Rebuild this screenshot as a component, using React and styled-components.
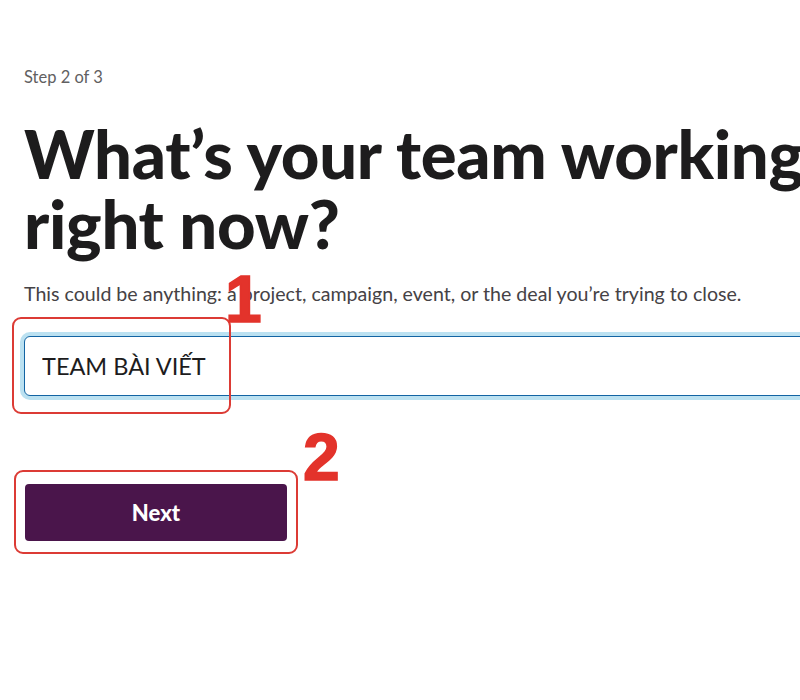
import styled, { createGlobalStyle } from 'styled-components';

const GlobalStyle = createGlobalStyle`
    html, body {
        margin: 0;
        padding: 0;
        background: #ffffff;
        overflow: hidden;
    }
    body {
        font-family: Lato, "Noto Sans", sans-serif;
        color: #1d1c1d;
    }
`;

const Page = styled.div`
    width: 800px;
    height: 700px;
    overflow: hidden;
    position: relative;
`;

const Content = styled.div`
    width: 960px;
    padding: 66px 0 0 24px;
    display: flex;
    flex-direction: column;
    align-items: flex-start;
`;

const StepLabel = styled.div`
    font-size: 16.5px;
    line-height: 22px;
    color: #616061;
`;

const Heading = styled.h1`
    margin: 30px 0 0 0;
    font-size: 67px;
    line-height: 70px;
    font-weight: 900;
    letter-spacing: -0.3px;
    white-space: nowrap;
    color: #1d1c1d;
`;

const Subtitle = styled.p`
    margin: 24px 0 0 0;
    font-size: 19.6px;
    line-height: 24px;
    color: #454245;
    white-space: nowrap;
`;

const Field = styled.input`
    box-sizing: border-box;
    margin-top: 30px;
    width: 900px;
    height: 60px;
    padding: 0 17px;
    font-family: inherit;
    font-size: 23.5px;
    color: #1d1c1d;
    border: 1px solid #1264a3;
    border-radius: 6px;
    box-shadow: 0 0 0 4px rgba(29, 155, 209, 0.3);
    outline: none;
    background: #fff;
`;

const NextButton = styled.button`
    margin-top: 88px;
    margin-left: 1px;
    width: 262px;
    height: 57px;
    border: none;
    border-radius: 4px;
    background: #4a154b;
    color: #fff;
    font-family: inherit;
    font-size: 22px;
    font-weight: 900;
    cursor: pointer;
`;

const Highlight = styled.div`
    position: absolute;
    left: ${p => p.$x}px;
    top: ${p => p.$y}px;
    width: ${p => p.$w}px;
    height: ${p => p.$h}px;
    box-sizing: border-box;
    border: 2px solid #dc3b35;
    border-radius: 9px;
`;

const Marker = styled.div`
    position: absolute;
    left: ${p => p.$x}px;
    top: ${p => p.$y}px;
    font-family: "Liberation Sans", Arial, sans-serif;
    font-weight: 700;
    font-size: 66px;
    line-height: 1;
    color: #e3332b;
    -webkit-text-stroke: 1.5px #e3332b;
`;

export default function App() {
    return (
        <Page>
            <GlobalStyle />
            <Content>
                <StepLabel>Step 2 of 3</StepLabel>
                <Heading>
                    What’s your team working on
                    <br />
                    right now?
                </Heading>
                <Subtitle>
                    This could be anything: a project, campaign, event, or the deal you’re trying to close.
                </Subtitle>
                <Field defaultValue="TEAM BÀI VIẾT" readOnly />
                <NextButton>Next</NextButton>
            </Content>

            <Highlight $x={12} $y={317} $w={219} $h={97} />
            <Highlight $x={14} $y={470} $w={284} $h={84} />
            <Marker $x={225} $y={266}>1</Marker>
            <Marker $x={303} $y={424}>2</Marker>
        </Page>
    );
}
